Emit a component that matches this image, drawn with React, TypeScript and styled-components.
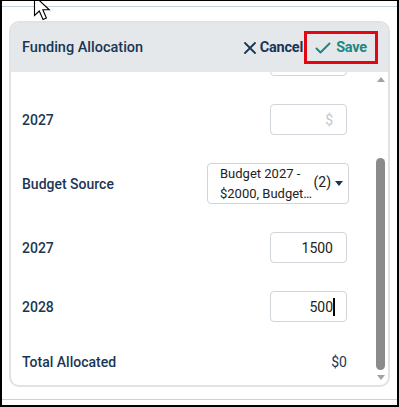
import React, { useLayoutEffect, useRef, useState } from 'react';
import styled, { createGlobalStyle } from 'styled-components';

const colors = {
  navy: '#1b3654',
  text: '#222222',
  teal: '#1d8782',
  headerBg: '#e4e8eb',
  cardBorder: '#e2e2e2',
  fieldBorder: '#cfd5db',
  placeholder: '#c3c8cd',
  frameLine: '#c9d1d9',
  scroll: '#8b8b8b',
};

const GlobalStyle = createGlobalStyle`
  html, body {
    margin: 0;
    padding: 0;
    background: #ffffff;
  }
  body {
    font-family: Roboto, "Liberation Sans", Arial, sans-serif;
  }
  * {
    box-sizing: border-box;
  }
`;

interface Row {
  label: string;
  kind: 'select' | 'field' | 'total';
  value?: string;
  placeholder?: string;
  focused?: boolean;
  lines?: string[];
  count?: number;
}

const rows: Row[] = [
  { label: 'Budget Source', kind: 'select', lines: ['Budget 2026 -', '$1000, Budget 2027'], count: 2 },
  { label: '2026', kind: 'field', value: '1000' },
  { label: '2027', kind: 'field', placeholder: '$' },
  { label: 'Budget Source', kind: 'select', lines: ['Budget 2027 -', '$2000, Budget 2028'], count: 2 },
  { label: '2027', kind: 'field', value: '1500' },
  { label: '2028', kind: 'field', value: '500', focused: true },
  { label: 'Total Allocated', kind: 'total', value: '$0' },
];

const ARROW = 15;

const CloseIcon = () => (
  <svg width="12" height="12" viewBox="0 0 12 12" fill="none">
    <path d="M1 1 L11 11 M11 1 L1 11" stroke={colors.navy} strokeWidth="1.8" strokeLinecap="round" />
  </svg>
);

const CheckIcon = () => (
  <svg width="16" height="12" viewBox="0 0 16 12" fill="none">
    <path d="M1.5 6.5 L5.5 10.5 L14.5 1.5" stroke={colors.teal} strokeWidth="2" strokeLinecap="round" strokeLinejoin="round" />
  </svg>
);

const Pointer = () => (
  <PointerSvg width="22" height="28" viewBox="0 0 22 28">
    <path
      d="M1.5 1 L1.5 20.5 L6.3 16 L10 24.5 L13.4 23 L9.8 14.8 L16.3 14.8 Z"
      fill="#ffffff"
      stroke="#000000"
      strokeWidth="1.1"
      strokeLinejoin="miter"
    />
  </PointerSvg>
);

export default function App() {
  const scrollRef = useRef<HTMLDivElement>(null);
  const [thumb, setThumb] = useState({ top: 0, height: 0 });

  useLayoutEffect(() => {
    const el = scrollRef.current;
    if (!el) return;
    el.scrollTop = el.scrollHeight;
    const track = el.clientHeight - ARROW * 2;
    setThumb({
      top: (track * el.scrollTop) / el.scrollHeight - 3,
      height: (track * el.clientHeight) / el.scrollHeight + 3,
    });
  }, []);

  return (
    <>
      <GlobalStyle />
      <Frame>
        <Page>
          <Card>
            <Header>
              <Title>Funding Allocation</Title>
              <Actions>
                <ActionButton>
                  <CloseIcon />
                  Cancel
                </ActionButton>
                <ActionButton $primary $highlighted>
                  <CheckIcon />
                  Save
                </ActionButton>
              </Actions>
            </Header>
            <Body>
              <Content ref={scrollRef}>
                <Rows>
                  {rows.map((row, idx) => (
                    <FormRow key={`${row.label}-${idx}`} $kind={row.kind}>
                      <Label>{row.label}</Label>
                      {row.kind === 'select' && (
                        <Select>
                          <SelectText>
                            {row.lines?.map((line) => (
                              <SelectLine key={line}>{line}</SelectLine>
                            ))}
                          </SelectText>
                          <Count>({row.count})</Count>
                          <Caret />
                        </Select>
                      )}
                      {row.kind === 'field' && (
                        <Field $empty={!row.value}>
                          {row.value || row.placeholder}
                          {row.focused && <TextCursor />}
                        </Field>
                      )}
                      {row.kind === 'total' && <TotalValue>{row.value}</TotalValue>}
                    </FormRow>
                  ))}
                </Rows>
              </Content>
              <ScrollTrack>
                <ScrollArrow $dir="up" />
                <ThumbArea>
                  <Thumb style={{ marginTop: thumb.top, height: thumb.height }} />
                </ThumbArea>
                <ScrollArrow $dir="down" />
              </ScrollTrack>
            </Body>
          </Card>
        </Page>
        <Pointer />
      </Frame>
    </>
  );
}

const Frame = styled.div`
  position: relative;
  width: 399px;
  height: 407px;
  border-top: 1px solid #000;
  border-left: 2px solid #000;
  border-right: 2px solid #000;
  border-bottom: 2px solid #000;
  padding: 5px 0 5px;
  overflow: hidden;
`;

const PointerSvg = styled.svg`
  position: absolute;
  left: 31px;
  top: -6px;
`;

const Page = styled.div`
  height: 394px;
  border-top: 1px solid ${colors.frameLine};
  border-bottom: 1px solid ${colors.frameLine};
  padding: 14px 7px 12px;
`;

const Card = styled.div`
  height: 366px;
  display: flex;
  flex-direction: column;
  border: 2px solid ${colors.cardBorder};
  border-radius: 10px;
  overflow: hidden;
  background: #ffffff;
`;

const Header = styled.div`
  flex: none;
  height: 49px;
  display: flex;
  align-items: center;
  justify-content: space-between;
  padding: 0 10px 0 11px;
  background: ${colors.headerBg};
`;

const Title = styled.div`
  font-size: 14.5px;
  font-weight: 500;
  color: ${colors.navy};
`;

const Actions = styled.div`
  display: flex;
  align-items: center;
`;

const ActionButton = styled.div<{ $primary?: boolean; $highlighted?: boolean }>`
  display: flex;
  align-items: center;
  gap: ${(p) => (p.$primary ? '5px' : '4px')};
  height: 33px;
  padding: ${(p) => (p.$highlighted ? '0 8px' : '0 1px 0 0')};
  border: ${(p) => (p.$highlighted ? '3px solid #e30613' : 'none')};
  font-size: 14.5px;
  font-weight: 700;
  color: ${(p) => (p.$primary ? colors.teal : colors.navy)};
  letter-spacing: -0.2px;
`;

const Body = styled.div`
  flex: 1;
  min-height: 0;
  display: flex;
`;

const Content = styled.div`
  flex: 1;
  min-width: 0;
  overflow: hidden;
`;

const ScrollTrack = styled.div`
  flex: none;
  width: ${ARROW}px;
  display: flex;
  flex-direction: column;
  align-items: center;
`;

const ScrollArrow = styled.div<{ $dir: 'up' | 'down' }>`
  flex: none;
  height: ${ARROW}px;
  width: 100%;
  display: flex;
  align-items: center;
  justify-content: center;

  &::before {
    content: '';
    width: 0;
    height: 0;
    border-left: 4.5px solid transparent;
    border-right: 4.5px solid transparent;
    ${(p) =>
      p.$dir === 'up'
        ? `border-bottom: 5px solid #a3a3a3;`
        : `border-top: 5px solid #a3a3a3;`}
  }
`;

const ThumbArea = styled.div`
  flex: 1;
  width: 100%;
  display: flex;
  flex-direction: column;
  align-items: center;
`;

const Thumb = styled.div`
  width: 9px;
  border-radius: 5px;
  background: ${colors.scroll};
`;

const Rows = styled.div`
  display: flex;
  flex-direction: column;
  gap: 28px;
  padding: 14px 24px 11px 11px;
`;

const FormRow = styled.div<{ $kind: Row['kind'] }>`
  display: flex;
  align-items: center;
  justify-content: space-between;
  min-height: ${(p) => (p.$kind === 'total' ? '24px' : 'auto')};
`;

const Label = styled.div`
  font-size: 14px;
  font-weight: 500;
  color: ${colors.navy};
`;

const Select = styled.div`
  width: 142px;
  height: 41px;
  display: flex;
  align-items: center;
  padding: 0 5px 0 12px;
  border: 1px solid ${colors.fieldBorder};
  border-radius: 4px;
  color: ${colors.text};
  font-size: 13px;
`;

const SelectText = styled.div`
  flex: 1;
  min-width: 0;
  display: flex;
  flex-direction: column;
  line-height: 20px;
`;

const SelectLine = styled.span`
  display: block;
  white-space: nowrap;
  overflow: hidden;
  text-overflow: ellipsis;
`;

const Count = styled.span`
  margin: -3px 4px 0 0;
  font-size: 14px;
`;

const Caret = styled.span`
  width: 0;
  height: 0;
  border-left: 4px solid transparent;
  border-right: 4px solid transparent;
  border-top: 5px solid ${colors.navy};
`;

const Field = styled.div<{ $empty?: boolean }>`
  width: 77px;
  height: 31px;
  margin-right: 2px;
  display: flex;
  align-items: center;
  justify-content: flex-end;
  padding-right: 13px;
  border: 1px solid ${colors.fieldBorder};
  border-radius: 4px;
  font-size: 14px;
  color: ${(p) => (p.$empty ? colors.placeholder : colors.text)};
`;

const TextCursor = styled.span`
  width: 1.5px;
  height: 18px;
  margin-right: -1.5px;
  background: #000;
`;

const TotalValue = styled.div`
  margin-right: 2px;
  font-size: 14px;
  color: ${colors.navy};
`;
